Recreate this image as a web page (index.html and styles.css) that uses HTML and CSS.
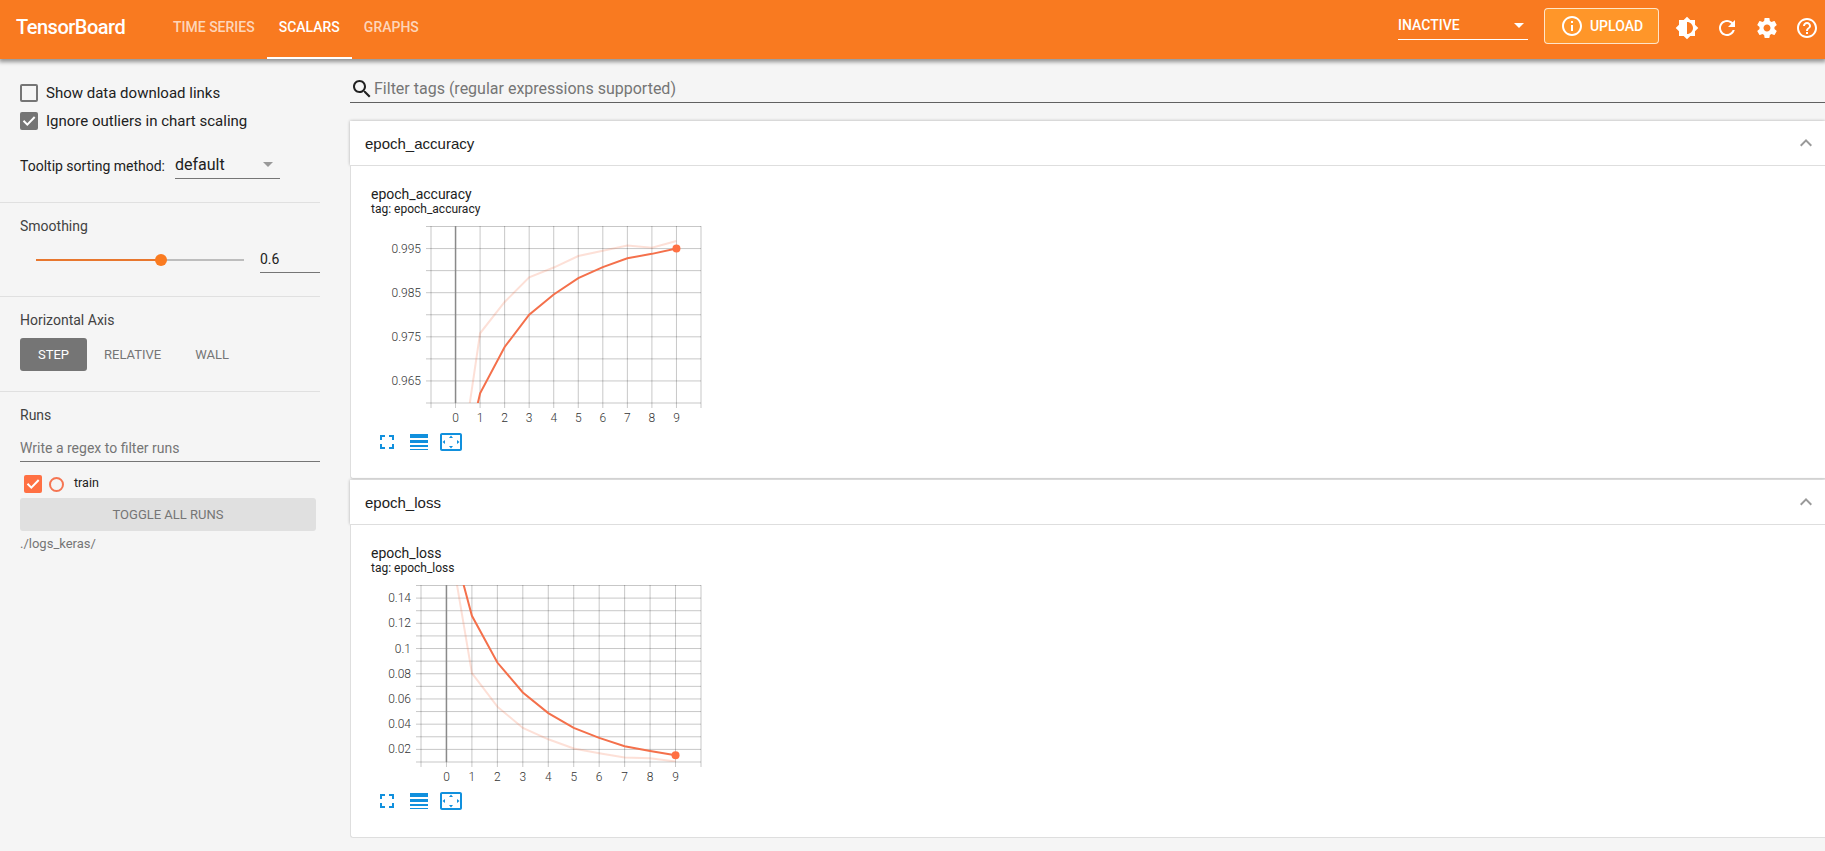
FILE: index.html
```html
<!DOCTYPE html>
<html lang="en">
<head>
  <meta charset="UTF-8" />
  <meta name="viewport" content="width=device-width, initial-scale=1.0"/>
  <title>TensorBoard</title>
  <link rel="stylesheet" href="styles.css">
</head>
<body>
  <header class="toolbar">
    <div class="brand">TensorBoard</div>
    <nav class="tabs">
      <a class="tab">TIME SERIES</a>
      <a class="tab active">SCALARS</a>
      <a class="tab">GRAPHS</a>
    </nav>
    <div class="plugin-select"><span>INACTIVE</span><i class="caret"></i></div>
    <button class="upload">
      <svg width="24" height="24" viewBox="0 0 24 24"><path d="M11 7h2v2h-2zm0 4h2v6h-2zm1-9C6.48 2 2 6.48 2 12s4.48 10 10 10 10-4.48 10-10S17.52 2 12 2zm0 18c-4.41 0-8-3.59-8-8s3.59-8 8-8 8 3.59 8 8-3.59 8-8 8z"/></svg>
      <span>UPLOAD</span>
    </button>
    <div class="actions">
      <svg viewBox="0 0 24 24"><path d="M20 15.31L23.31 12 20 8.69V4h-4.69L12 .69 8.69 4H4v4.69L.69 12 4 15.31V20h4.69L12 23.31 15.31 20H20v-4.69zM12 18V6c3.31 0 6 2.69 6 6s-2.69 6-6 6z"/></svg>
      <svg viewBox="0 0 24 24"><path d="M17.65 6.35C16.2 4.9 14.21 4 12 4c-4.42 0-7.99 3.58-7.99 8s3.57 8 7.99 8c3.73 0 6.84-2.55 7.73-6h-2.08c-.82 2.33-3.04 4-5.65 4-3.31 0-6-2.69-6-6s2.69-6 6-6c1.66 0 3.14.69 4.22 1.78L13 11h7V4l-2.35 2.35z"/></svg>
      <svg viewBox="0 0 24 24"><path d="M19.43 12.98c.04-.32.07-.64.07-.98s-.03-.66-.07-.98l2.11-1.65c.19-.15.24-.42.12-.64l-2-3.46c-.12-.22-.39-.3-.61-.22l-2.49 1c-.52-.4-1.08-.73-1.69-.98l-.38-2.65C14.46 2.18 14.25 2 14 2h-4c-.25 0-.46.18-.49.42l-.38 2.65c-.61.25-1.17.59-1.69.98l-2.49-1c-.23-.09-.49 0-.61.22l-2 3.46c-.13.22-.07.49.12.64l2.11 1.65c-.04.32-.07.65-.07.98s.03.66.07.98l-2.11 1.65c-.19.15-.24.42-.12.64l2 3.46c.12.22.39.3.61.22l2.49-1c.52.4 1.08.73 1.69.98l.38 2.65c.03.24.24.42.49.42h4c.25 0 .46-.18.49-.42l.38-2.65c.61-.25 1.17-.59 1.69-.98l2.49 1c.23.09.49 0 .61-.22l2-3.46c.12-.22.07-.49-.12-.64l-2.11-1.65zM12 15.5c-1.93 0-3.5-1.57-3.5-3.5s1.57-3.5 3.5-3.5 3.5 1.57 3.5 3.5-1.57 3.5-3.5 3.5z"/></svg>
      <svg viewBox="0 0 24 24"><path d="M11 18h2v-2h-2v2zm1-16C6.48 2 2 6.48 2 12s4.48 10 10 10 10-4.48 10-10S17.52 2 12 2zm0 18c-4.41 0-8-3.59-8-8s3.59-8 8-8 8 3.59 8 8-3.59 8-8 8zm0-14c-2.21 0-4 1.79-4 4h2c0-1.1.9-2 2-2s2 .9 2 2c0 2-3 1.75-3 5h2c0-2.25 3-2.5 3-5 0-2.21-1.79-4-4-4z"/></svg>
    </div>
  </header>

  <div class="layout">
    <aside class="sidebar">
      <section class="options">
        <label class="check-row"><span class="box"></span>Show data download links</label>
        <label class="check-row">
          <span class="box checked"><svg viewBox="0 0 18 18"><path d="M3.5 8.8l3.8 3.8 7.4-7.6"/></svg></span>Ignore outliers in chart scaling
        </label>
        <div class="sorting">
          <span class="sorting-label">Tooltip sorting method:</span>
          <div class="dropdown"><span>default</span><i class="caret"></i></div>
        </div>
      </section>
      <section class="smoothing">
        <h3>Smoothing</h3>
        <div class="slider-row">
          <div class="slider"><div class="fill"></div><div class="knob"></div></div>
          <div class="slider-value">0.6</div>
        </div>
      </section>
      <section class="axis">
        <h3>Horizontal Axis</h3>
        <div class="axis-buttons">
          <button class="selected">STEP</button>
          <button>RELATIVE</button>
          <button>WALL</button>
        </div>
      </section>
      <section class="runs">
        <h3>Runs</h3>
        <div class="regex">Write a regex to filter runs</div>
        <div class="run-row">
          <span class="box checked"><svg viewBox="0 0 18 18"><path d="M3.5 8.8l3.8 3.8 7.4-7.6"/></svg></span>
          <span class="isolate"></span>
          <span class="run-name">train</span>
        </div>
        <button class="toggle-all">TOGGLE ALL RUNS</button>
        <div class="logdir">./logs_keras/</div>
      </section>
    </aside>

    <main class="center">
      <div class="tag-filter">
        <svg width="24" height="24" viewBox="0 0 24 24"><path d="M15.5 14h-.79l-.28-.27C15.41 12.59 16 11.11 16 9.5 16 5.91 13.09 3 9.5 3S3 5.91 3 9.5 5.91 16 9.5 16c1.61 0 3.09-.59 4.23-1.57l.27.28v.79l5 4.99L20.49 19l-4.99-5zm-6 0C7.01 14 5 11.99 5 9.5S7.01 5 9.5 5 14 7.01 14 9.5 11.99 14 9.5 14z"/></svg>
        <span>Filter tags (regular expressions supported)</span>
      </div>

      <div class="category">
        <div class="heading"><span>epoch_accuracy</span><svg viewBox="0 0 24 24"><path d="M12 8l-6 6 1.41 1.41L12 10.83l4.59 4.58L18 14z"/></svg></div>
        <div class="content">
          <div class="card-title">epoch_accuracy</div>
          <div class="card-tag">tag: epoch_accuracy</div>
          <svg class="chart" id="accuracyChart" width="331" height="204"></svg>
          <div class="card-actions">
            <svg width="24" height="24" viewBox="0 0 24 24"><path d="M7 14H5v5h5v-2H7v-3zm-2-4h2V7h3V5H5v5zm12 7h-3v2h5v-5h-2v3zM14 5v2h3v3h2V5h-5z"/></svg>
            <svg width="24" height="24" viewBox="0 0 24 24"><path d="M3 4h18v4H3zM3 10h18v3H3zM3 15h18v2H3zM3 19h18v1H3z"/></svg>
            <svg width="24" height="24" viewBox="0 0 24 24"><path d="M12 5.5L10 8h4l-2-2.5zm6 4.5v4l2.5-2L18 10zM6 10l-2.500 2L6 14v-4zm8 6h-4l2 2.500 2-2.500zm7-13H3c-1.100 0-2 .9-2 2v14c0 1.100.9 2 2 2h18c1.100 0 2-.9 2-2V5c0-1.100-.9-2-2-2zm0 16.010H3V4.990h18v14.020z"/></svg>
          </div>
        </div>
      </div>

      <div class="category">
        <div class="heading"><span>epoch_loss</span><svg viewBox="0 0 24 24"><path d="M12 8l-6 6 1.41 1.41L12 10.83l4.59 4.58L18 14z"/></svg></div>
        <div class="content">
          <div class="card-title">epoch_loss</div>
          <div class="card-tag">tag: epoch_loss</div>
          <svg class="chart" id="lossChart" width="331" height="204"></svg>
          <div class="card-actions">
            <svg width="24" height="24" viewBox="0 0 24 24"><path d="M7 14H5v5h5v-2H7v-3zm-2-4h2V7h3V5H5v5zm12 7h-3v2h5v-5h-2v3zM14 5v2h3v3h2V5h-5z"/></svg>
            <svg width="24" height="24" viewBox="0 0 24 24"><path d="M3 4h18v4H3zM3 10h18v3H3zM3 15h18v2H3zM3 19h18v1H3z"/></svg>
            <svg width="24" height="24" viewBox="0 0 24 24"><path d="M12 5.5L10 8h4l-2-2.5zm6 4.5v4l2.5-2L18 10zM6 10l-2.500 2L6 14v-4zm8 6h-4l2 2.500 2-2.500zm7-13H3c-1.100 0-2 .9-2 2v14c0 1.100.9 2 2 2h18c1.100 0 2-.9 2-2V5c0-1.100-.9-2-2-2zm0 16.010H3V4.990h18v14.020z"/></svg>
          </div>
        </div>
      </div>
    </main>
  </div>

  <script src="charts.js"></script>
</body>
</html>
```

FILE: styles.css
```css
* {
  box-sizing: border-box;
}
body {
  margin: 0;
  height: 851px;
  overflow: hidden;
  background-color: #f5f5f5;
  color: #212121;
  font-family: Roboto, sans-serif;
}
button {
  border: none;
  background: none;
  padding: 0;
  font-family: inherit;
}
svg {
  display: block;
  flex: none;
}
h3 {
  margin: 0;
  font-size: 14px;
  font-weight: 400;
  line-height: 18px;
  color: #424242;
}

/* top bar */
.toolbar {
  position: relative;
  display: flex;
  align-items: center;
  height: 59px;
  padding: 0 6px 6px 16px;
  background-color: #f97a20;
  color: #fff;
  box-shadow: 0 2px 4px 1px rgba(0,0,0,0.4);
}
.brand {
  width: 145px;
  font-size: 20px;
  font-weight: 500;
  letter-spacing: -0.5px;
}
.tabs {
  display: flex;
  align-self: flex-start;
}
.tab {
  height: 59px;
  padding: 0 12px;
  font-size: 14px;
  font-weight: 500;
  line-height: 54px;
  color: rgba(255,255,255,0.7);
}
.tab.active {
  color: #fff;
  border-bottom: 2px solid #fff;
}
.caret {
  border: 5px solid transparent;
  border-top-color: currentColor;
  border-bottom: none;
}
.plugin-select {
  display: flex;
  align-items: center;
  justify-content: space-between;
  width: 130px;
  height: 29px;
  margin: -2px 16px 0 auto;
  padding-right: 4px;
  border-bottom: 1px solid #fff;
  font-size: 14px;
  font-weight: 500;
}
.upload {
  display: flex;
  align-items: center;
  justify-content: center;
  gap: 6px;
  width: 115px;
  height: 36px;
  margin: -2px 16px 0 0;
  border: 1px solid rgba(255,255,255,0.75);
  border-radius: 4px;
  background-color: #ff9629;
  color: #fff;
  font-size: 14px;
  font-weight: 500;
}
.toolbar svg {
  fill: #fff;
}
.actions {
  display: flex;
  gap: 16px;
  padding-top: 3px;
}
.actions svg {
  width: 24px;
  height: 24px;
}

.layout {
  display: flex;
  height: 792px;
}

/* sidebar */
.sidebar {
  width: 320px;
  margin-right: 30px;
}
.sidebar section {
  padding-left: 20px;
  border-bottom: 1px solid #e0e0e0;
}
.sidebar section:last-child {
  border-bottom: none;
}
.options {
  height: 144px;
  padding-top: 20px;
}
.check-row {
  display: flex;
  align-items: center;
  gap: 8px;
  height: 28px;
  font-size: 15px;
}
.box {
  width: 18px;
  height: 18px;
  border: 2px solid #757575;
  border-radius: 2px;
}
.box.checked {
  border: none;
  background-color: #757575;
}
.box path {
  fill: none;
  stroke: #fff;
  stroke-width: 2;
}
.sorting {
  display: flex;
  align-items: center;
  gap: 10px;
  margin-top: 15px;
  font-size: 14px;
}
.sorting-label {
  padding-top: 2px;
}
.dropdown {
  display: flex;
  align-items: center;
  justify-content: space-between;
  width: 105px;
  height: 29px;
  padding-right: 7px;
  border-bottom: 1px solid #757575;
  font-size: 16px;
}
.dropdown .caret {
  color: #999;
}
.smoothing {
  height: 94px;
  padding-top: 14px;
}
.slider-row {
  display: flex;
  align-items: flex-start;
  margin-top: 13px;
}
.slider {
  position: relative;
  width: 208px;
  height: 2px;
  margin: 11px 16px 0;
  background-color: #bdbdbd;
}
.fill {
  width: 60%;
  height: 2px;
  background-color: #e8772e;
}
.knob {
  position: absolute;
  left: 119px;
  top: -5px;
  width: 12px;
  height: 12px;
  border-radius: 50%;
  background-color: #fa7b20;
}
.slider-value {
  width: 60px;
  height: 25px;
  border-bottom: 1px solid #757575;
  font-size: 14px;
  line-height: 22px;
}
.axis {
  height: 95px;
  padding-top: 14px;
}
.axis-buttons {
  display: flex;
  margin-top: 9px;
}
.axis-buttons button {
  height: 33px;
  padding: 0 17px;
  border-radius: 3px;
  font-size: 13px;
  color: #757575;
}
.axis-buttons .selected {
  width: 67px;
  background-color: #757575;
  color: #fff;
}
.runs {
  padding-top: 14px;
}
.regex {
  height: 31px;
  margin-top: 7px;
  border-bottom: 1px solid #757575;
  font-size: 14px;
  line-height: 34px;
  color: #757575;
}
.run-row {
  display: flex;
  align-items: center;
  height: 36px;
  padding: 8px 0 0 4px;
  font-size: 12.5px;
}
.run-row .checked {
  background-color: #ff7043;
}
.isolate {
  width: 15px;
  height: 15px;
  margin: 0 10px 0 7px;
  border: 2px solid #f57552;
  border-radius: 50%;
}
.run-name {
  padding-bottom: 3px;
}
.toggle-all {
  display: block;
  width: 296px;
  height: 33px;
  border-radius: 3px;
  background-color: #e0e0e0;
  color: #757575;
  font-size: 13px;
}
.logdir {
  margin-top: 5px;
  font-size: 13px;
  line-height: 16px;
  color: #757575;
}

/* charts */
.center {
  flex: 1;
  min-width: 0;
}
.tag-filter {
  display: flex;
  align-items: center;
  height: 33px;
  margin: 11px 0 18px;
  padding-top: 5px;
  border-bottom: 1px solid #616161;
  color: #757575;
  font-size: 16px;
}
.tag-filter svg {
  fill: #212121;
}
.category {
  height: 359px;
}
.heading {
  display: flex;
  align-items: center;
  justify-content: space-between;
  height: 44px;
  padding: 1px 7px 0 15px;
  background-color: #fff;
  box-shadow: 0 0 3px rgba(0,0,0,0.3);
  font-family: "Liberation Sans", Arial, sans-serif;
  font-size: 15px;
}
.heading svg {
  width: 24px;
  height: 24px;
  margin-top: -1px;
  fill: #999;
}
.content {
  height: 314px;
  padding: 20px 0 0 20px;
  border: 1px solid #dedede;
  border-right: none;
  border-radius: 0 0 0 3px;
  background-color: #fff;
}
.card-title {
  font-size: 14px;
  line-height: 16px;
}
.card-tag {
  font-size: 12px;
  line-height: 14px;
}
.chart {
  margin-top: 10px;
}
.chart text {
  font-size: 12px;
  font-weight: 300;
  fill: #333;
}
.grid {
  stroke: #000;
  stroke-opacity: 0.22;
}
.zero {
  stroke: #8a8a8a;
  stroke-width: 1.5;
}
.raw, .smooth {
  fill: none;
  stroke: #f4704b;
  stroke-width: 2;
}
.raw {
  stroke-opacity: 0.22;
}
.dot {
  fill: #ff7043;
}
.card-actions {
  display: flex;
  gap: 8px;
  padding-left: 4px;
}
.card-actions svg {
  fill: #1190dd;
}
```

FILE: charts.js
```js
const HEIGHT = 177;
const RIGHT = 330;

function line(x1, y1, x2, y2, cls) {
  return `<line class="${cls}" x1="${x1}" y1="${y1}" x2="${x2}" y2="${y2}" />`;
}

function drawChart(id, opts) {
  const { left, min, max, tick, firstLabel, labelEvery, digits, raw, smooth } = opts;
  const stepWidth = (RIGHT - left) / 11;
  const x = step => left + (step + 1) * stepWidth;
  const y = value => 0.5 + (max - value) / (max - min) * (HEIGHT - 0.5);
  const points = data => data.map((v, i) => `${x(i)},${y(v)}`).join(' ');

  let out = `<clipPath id="${id}Clip"><rect x="${left}" y="0" width="${RIGHT - left}" height="${HEIGHT}" /></clipPath>`;
  for (let s = -1; s <= 10; s++) {
    out += line(x(s), 0, x(s), HEIGHT + 5, 'grid');
    if (s >= 0 && s < 10) {
      out += `<text x="${x(s)}" y="196" text-anchor="middle">${s}</text>`;
    }
  }
  const count = Math.round((max - min) / tick);
  for (let i = 0; i <= count; i++) {
    const value = min + i * tick;
    out += line(left - 5, y(value), RIGHT, y(value), 'grid');
    if (i >= firstLabel && (i - firstLabel) % labelEvery === 0) {
      out += `<text x="${left - 10}" y="${y(value) + 4}" text-anchor="end">${+value.toFixed(digits)}</text>`;
    }
  }
  out += line(x(0), 0, x(0), HEIGHT, 'zero');
  out += `<g clip-path="url(#${id}Clip)">
    <polyline class="raw" points="${points(raw)}" />
    <polyline class="smooth" points="${points(smooth)}" />
  </g>`;
  out += `<circle class="dot" cx="${x(9)}" cy="${y(smooth[9])}" r="4" />`;
  document.getElementById(id).innerHTML = out;
}

drawChart('accuracyChart', {
  left: 60, min: 0.96, max: 1, tick: 0.005, firstLabel: 1, labelEvery: 2, digits: 3,
  raw: [0.938, 0.9758, 0.9829, 0.9885, 0.9907, 0.9933, 0.9945, 0.9957, 0.9952, 0.9967],
  smooth: [0.938, 0.9622, 0.9727, 0.98, 0.9846, 0.9883, 0.9908, 0.9928, 0.9938, 0.995]
});

drawChart('lossChart', {
  left: 50, min: 0.01, max: 0.15, tick: 0.01, firstLabel: 1, labelEvery: 2, digits: 2,
  raw: [0.2, 0.0805, 0.0539, 0.037, 0.028, 0.0207, 0.017, 0.0135, 0.013, 0.0104],
  smooth: [0.2014, 0.126, 0.0889, 0.0652, 0.0488, 0.037, 0.0291, 0.0225, 0.0188, 0.0154]
});
```
